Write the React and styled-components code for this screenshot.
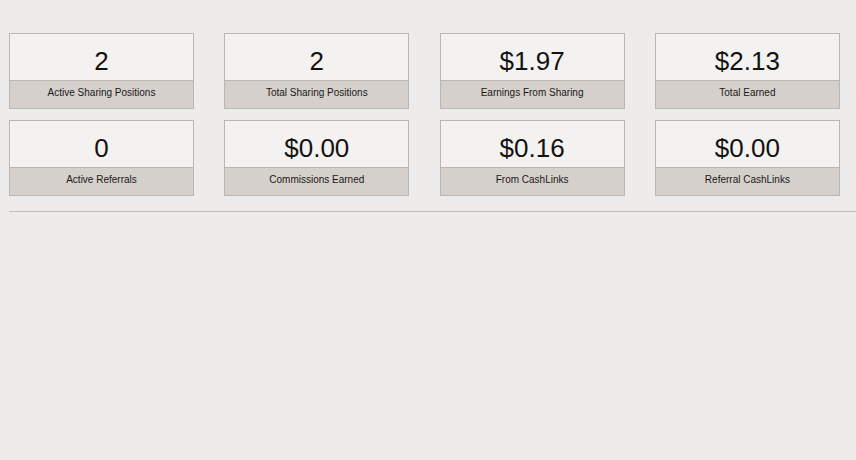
import styled, { createGlobalStyle } from "styled-components";

const GlobalStyle = createGlobalStyle`
  html, body {
    margin: 0;
    padding: 0;
    background: #edecea;
  }
  body {
    font-family: "Liberation Sans", Arial, sans-serif;
    color: #111;
  }
`;

const stats = [
  { value: "2", label: "Active Sharing Positions" },
  { value: "2", label: "Total Sharing Positions" },
  { value: "$1.97", label: "Earnings From Sharing" },
  { value: "$2.13", label: "Total Earned" },
  { value: "0", label: "Active Referrals" },
  { value: "$0.00", label: "Commissions Earned" },
  { value: "$0.16", label: "From CashLinks" },
  { value: "$0.00", label: "Referral CashLinks" },
];

const Page = styled.div`
  padding-top: 33px;
  padding-left: 9px;
  width: 856px;
  height: 460px;
  box-sizing: border-box;
`;

const StatGrid = styled.div`
  display: grid;
  grid-template-columns: repeat(4, 185px);
  column-gap: 30.3px;
  row-gap: 11px;
`;

const Card = styled.div`
  display: flex;
  flex-direction: column;
  height: 76px;
  box-sizing: border-box;
  border: 1px solid #bab6b2;
  background: #f3f2f0;
`;

const Value = styled.div`
  height: 47px;
  box-sizing: border-box;
  padding-top: 8px;
  display: flex;
  align-items: center;
  justify-content: center;
  font-size: 26px;
  color: #141210;
  border-bottom: 1px solid #bab6b2;
`;

const Label = styled.div`
  flex: 1;
  display: flex;
  align-items: center;
  justify-content: center;
  font-size: 10px;
  color: #1a1816;
  background: #d5d0cc;
  padding-bottom: 5px;
`;

const Divider = styled.hr`
  margin: 15px 0 0;
  border: 0;
  border-top: 1px solid #c2bfbb;
`;

export default function App() {
  return (
    <Page>
      <GlobalStyle />
      <StatGrid>
        {stats.map((s, i) => (
          <Card key={i}>
            <Value>{s.value}</Value>
            <Label>{s.label}</Label>
          </Card>
        ))}
      </StatGrid>
      <Divider />
    </Page>
  );
}
